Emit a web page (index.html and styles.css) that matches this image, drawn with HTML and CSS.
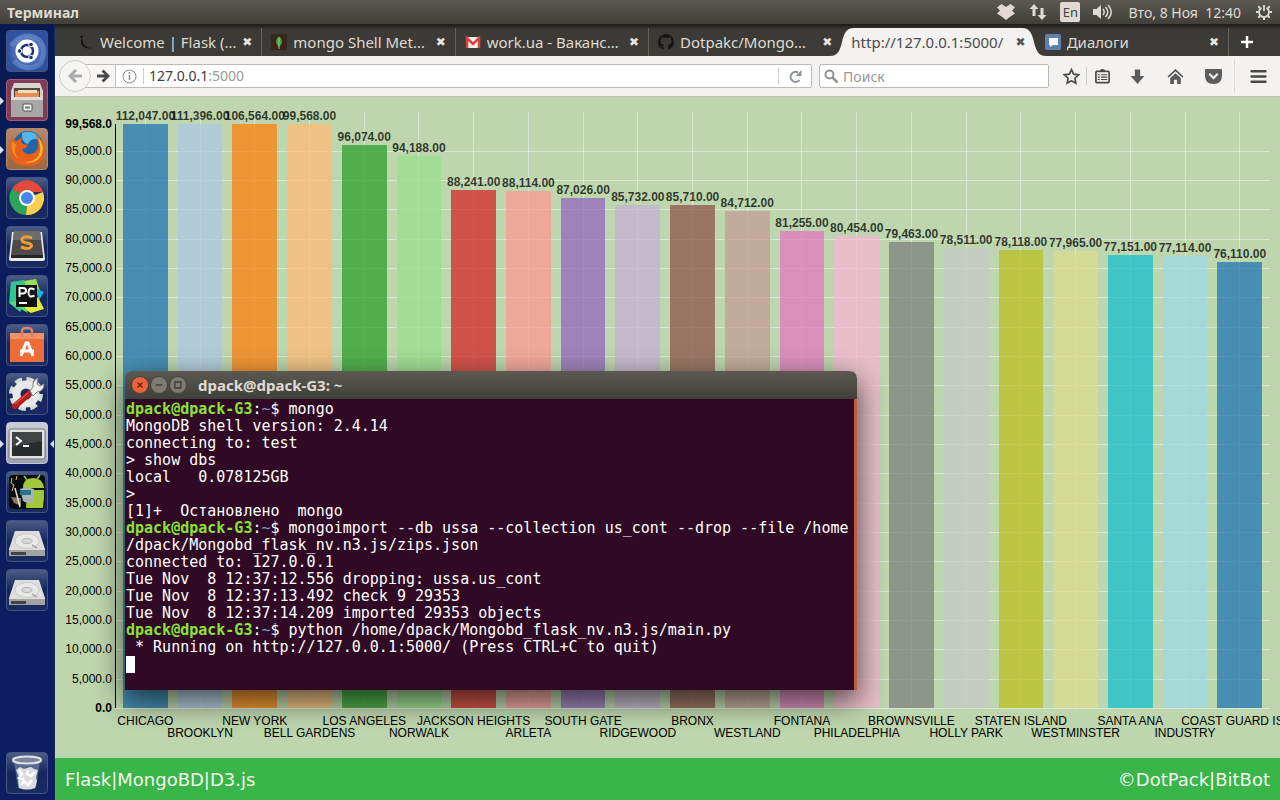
FILE: index.html
```html
<!DOCTYPE html>
<html lang="ru">
<head>
<meta charset="utf-8">
<meta name="viewport" content="width=device-width, initial-scale=1">
<title>Терминал</title>
<link rel="stylesheet" href="styles.css">
</head>
<body>
<header class="panel">
  <h1 class="panel-title">Терминал</h1>
  <div class="indicators">
    <svg class="ind" width="20" height="18" viewBox="0 0 20 18" fill="#dfdbd2"><path d="M5.500 1L10 4l4.500-3L19 4.500 16 7.500l3 3-4.500 3L10 17l-4.500-3.500-4.500-3 3-3-3-3z"/></svg>
    <svg class="ind" width="18" height="16" viewBox="0 0 18 16" fill="#dfdbd2"><path d="M5 0L.5 5h3v7h3V5h3zM13 16l4.500-5h-3V4h-3v7h-3z"/></svg>
    <span class="layout">En</span>
    <svg class="ind" width="20" height="16" viewBox="0 0 20 16"><path fill="#dfdbd2" d="M0 5h3.500L8 1v14l-4.500-4H0z"/><path d="M10 5q2.500 3 0 6M12.500 3q4.500 5 0 10M15 1q6.500 7 0 14" fill="none" stroke="#dfdbd2" stroke-width="1.500"/></svg>
    <time class="clock">Вто, 8 Ноя&nbsp; 12:40</time>
    <svg class="ind" width="16" height="16" viewBox="0 0 16 16" fill="none" stroke="#dfdbd2"><path stroke-width="1.800" d="M5.500 3.800a5 5 0 1 0 5 0M8 1v6"/><path stroke-width="2" d="M2.300 2.300l1.700 1.700M13.700 2.300L12 4M0 8h2.500M13.500 8H16M2.300 13.700L4 12M13.700 13.700L12 12M8 13.500V16"/></svg>
  </div>
</header>

<div class="desktop">
  <nav class="launcher" aria-label="Launcher">
    <button class="tile tile-dash" aria-label="Ubuntu"><svg viewBox="0 0 42 42"><path d="M5 16Q18 0 33 10Q42 20 34 34Q20 43 8 31" fill="none" stroke="#8fb0ea" stroke-width="5" opacity=".35"/><circle cx="21" cy="21" r="11.500" fill="#fff"/><circle cx="21" cy="21" r="6" fill="none" stroke="#1d3577" stroke-width="2.500"/><g fill="#1d3577" stroke="#fff"><circle cx="13.500" cy="21" r="2.300"/><circle cx="25" cy="14.500" r="2.300"/><circle cx="25" cy="27.500" r="2.300"/></g></svg></button>
    <button class="tile tile-files running" aria-label="Files"><svg viewBox="0 0 42 42"><path d="M8 4h26l3 8v25q0 1-1 1H6q-1 0-1-1V12z" fill="#d6d4d0"/><path d="M8 9h26v9H8z" fill="#4f4842"/><path d="M9 12h24v6H9z" fill="#e88e55"/><path d="M12 11h19v3H12z" fill="#f3ddbd"/><path d="M5 18h32v19q0 1-1 1H6q-1 0-1-1z" fill="#a8a7a5"/><path d="M5 18h32v3H5z" fill="#deddda"/><rect x="17" y="25" width="9" height="7" rx="1" fill="#eee" stroke="#555"/><path d="M19 27.500h5v2h-5z" fill="#777"/></svg></button>
    <button class="tile tile-firefox running" aria-label="Firefox"><svg viewBox="0 0 42 42"><circle cx="22" cy="18" r="15" fill="#2165a7"/><path d="M16 5q12-4 18 6-10-1-12 5-7-2-6-11z" fill="#55b7e7"/><path d="M5 9q3 4 6 4 2-3 6-3-4 4 0 6l5 1q-2 4-6 4 2 6 8 5 7-1 8-7 1-7-3-12 12 7 9 20-3 11-17 11Q5 37 4 23q0-8 1-14z" fill="#e8601c"/><path d="M32 9q8 10 3 19-6 9-17 6 18 0 16-17z" fill="#f9ba2b"/><path d="M6 13q-2 12 6 18-5-8-2-14z" fill="#f58b24"/></svg></button>
    <button class="tile" aria-label="Chrome"><svg viewBox="0 0 42 42"><path d="M21 21L6 12a17 17 0 0 1 31 3H21z" fill="#e24a3b"/><path d="M21 21L37 15a17 17 0 0 1-17 23z" fill="#fbd04c"/><path d="M21 21l-1 17A17 17 0 0 1 6 12z" fill="#2da45a"/><circle cx="21" cy="21" r="8" fill="#fff"/><circle cx="21" cy="21" r="6" fill="#4687ed"/></svg></button>
    <button class="tile" aria-label="Sublime Text"><svg viewBox="0 0 42 42"><path d="M6 6h30l3 27q0 2-2 2H5q-2 0-2-2z" fill="#e9e9e9"/><path d="M8 5h26l3 24H5z" fill="#4b4b4b"/><path d="M8 5h26l1 9H7z" fill="#6d6d6d"/><path d="M5 29h32v3H5z" fill="#252525"/><path d="M26 12q-8-3-10 1-1 3 5 4t4 4q-2 3-10 0" fill="none" stroke="#f39a36" stroke-width="3"/></svg></button>
    <button class="tile" aria-label="PyCharm"><svg viewBox="0 0 42 42"><path d="M5 7l13-2 7 12-11 20-11-9z" fill="#2bc891"/><path d="M18 6l12-2 4 12-8 8z" fill="#9adf4c"/><path d="M29 13l9 4-5 8z" fill="#18b2dd"/><path d="M13 31l19-9 6 12-13 4z" fill="#dfea3b"/><path d="M4 28l10-4 8 14z" fill="#62da68"/><path d="M10 10h21v22H10z" fill="#111"/><path d="M13.500 22v-9h3.500q3 0 3 2.700T17 18.500h-3M28.500 14.500q-6-3-6 3t6 3" fill="none" stroke="#fff" stroke-width="2"/><path d="M13 28h8" stroke="#fff" stroke-width="2"/></svg></button>
    <button class="tile" aria-label="Software"><svg viewBox="0 0 42 42"><path d="M4 9h34v29H4z" fill="#ed6d38"/><path d="M4 9h34v6H4z" fill="#f59066"/><path d="M16 13V7q0-3 5-3t5 3v6" fill="none" stroke="#d9806a" stroke-width="2.500"/><path d="M15 32l5-13h2l5 13M14 27h14" fill="none" stroke="#fff" stroke-width="3"/></svg></button>
    <button class="tile" aria-label="Settings"><svg viewBox="0 0 42 42"><circle cx="20" cy="21" r="14.500" fill="none" stroke="#d9dadb" stroke-width="5" stroke-dasharray="7 4.400"/><circle cx="20" cy="21" r="9.500" fill="none" stroke="#e8e8e8" stroke-width="8"/><path d="M9 33L24 20" stroke="#b51d1d" stroke-width="6" stroke-linecap="round"/><path d="M9 31L22 20" stroke="#e34b42" stroke-width="1.500"/><path d="M24 18l3-4q-1-6 5-9l-1 6 3 2 4-2q0 7-7 8l-4 4z" fill="#f0f0f0" stroke="#888"/></svg></button>
    <button class="tile tile-active running focused" aria-label="Terminal"><svg viewBox="0 0 42 42"><rect x="3" y="7" width="36" height="30" rx="2" fill="#e0e0df" stroke="#777"/><path d="M6 10h30v24H6z" fill="#292b2d"/><path d="M6 10h30v9L6 25z" fill="#414345"/><path d="M10 15l5 4-5 4M17 24h6" fill="none" stroke="#fff" stroke-width="2"/></svg></button>
    <button class="tile" aria-label="Android"><svg viewBox="0 0 42 42"><rect x="3" y="4" width="36" height="34" rx="4" fill="#080b0e"/><path d="M17 17q0-10 10-10 10 0 11 10zM21 19h17v8l-1 10H20z" fill="#a0c93a"/><path d="M21 9l-3-4M31 8l3-4" stroke="#a0c93a" stroke-width="1.500"/><path d="M14 18q7-3 14 0v12q-5 4-11 0z" fill="#a8b4b4"/><path d="M14 19h11v5H14z" fill="#28718d"/><path d="M5 26l10 1v8l-7-3z" fill="#8a7766"/><path d="M9 17l5 19" stroke="#ddd" stroke-width="1.500"/><path d="M6 7l-1 5 3 2-2 6M11 5l-1 4" fill="none" stroke="#dbcc34"/></svg></button>
    <button class="tile" aria-label="Disk"><svg viewBox="0 0 42 42"><use href="#disk"/></svg></button>
    <button class="tile" aria-label="Disk 2"><svg viewBox="0 0 42 42"><g id="disk"><path d="M9 11h24l6 18v6q0 1-1 1H4q-1 0-1-1v-6z" fill="#dddddc"/><path d="M3 30h36v5q0 1-1 1H4q-1 0-1-1z" fill="#a3a3a1"/><path d="M5 32h15v3H5z" fill="#444"/><ellipse cx="21" cy="21" rx="12" ry="7.500" fill="#e8e8e6" stroke="#c8c8c8"/><ellipse cx="21" cy="21" rx="5" ry="2.500" fill="#d8d8d7" stroke="#b5b5b5"/><path d="M31 28l-5-3" stroke="#aaa" stroke-width="1.500"/></g></svg></button>
    <button class="tile tile-trash" aria-label="Trash"><svg viewBox="0 0 42 42"><path d="M8 9h26l-4 27q-9 3-18 0z" fill="#8e9cb4" opacity=".5"/><path d="M10 18l4-3 4 2 3-1 4-1 3 2 4 1-2 7 1 4-2 7q-8 3-16 0l-1-7 1-4z" fill="#d9dbdd"/><path d="M13 18l3 4-3 4 5 1M22 18l-1 4 4 2 4-4M15 33l3-4 4 4 4-5" fill="none" stroke="#fff" stroke-width="2.500"/><ellipse cx="21" cy="8" rx="14" ry="3.500" fill="#77849a" stroke="#dfe4e7" stroke-width="2"/></svg></button>
  </nav>

  <main class="browser">
    <div class="tabs">
      <div class="tab"><svg class="fav" viewBox="0 0 16 16"><path d="M1 3l5-2-2 3 1 5q3 5 9 5-9 2-11-5L3 4z" fill="#171716"/></svg><a href="#flask">Welcome | Flask (…</a><button class="close" aria-label="Close"></button></div>
      <div class="tab split"><svg class="fav" viewBox="0 0 16 16"><path d="M0 0h16v16H0z" fill="#3b2418"/><path d="M8 2q-6 6 0 11 6-5 0-11z" fill="#3fa34b"/><path d="M8 4v11" stroke="#a8c17c"/></svg><a href="#mongo">mongo Shell Met…</a><button class="close" aria-label="Close"></button></div>
      <div class="tab split"><svg class="fav" viewBox="0 0 16 16"><path d="M1 3h14v11H1z" fill="#f0eeee"/><path d="M2 14V4l6 6 6-6v10" fill="none" stroke="#d7433a" stroke-width="2.500"/></svg><a href="#work">work.ua - Ваканс…</a><button class="close" aria-label="Close"></button></div>
      <div class="tab split"><svg class="fav" viewBox="0 0 16 16"><path d="M8 0a8 8 0 0 0-2.500 15.600V13Q3 13.500 2.500 11.500q2.500 2 3.500-.5-3.500-.5-3.500-4 0-1 .8-2-.3-1 .1-2 1 0 2.100.9 2.500-.6 5 0 1.100-.9 2.100-.9.4 1 .1 2 .8 1 .8 2 0 3.500-3.500 4 .5.500.5 1.500v3.100A8 8 0 0 0 8 0z" fill="#151513"/></svg><a href="#github">Dotpakc/Mongo…</a><button class="close" aria-label="Close"></button></div>
      <div class="tab tab-current"><svg class="curve curve-left" viewBox="0 0 24 28"><path d="M0 28C8 28 10 22 12 14S16 0 24 0V28z" fill="#f3f2f1"/></svg><svg class="curve curve-right" viewBox="0 0 24 28"><path d="M24 28C16 28 14 22 12 14S8 0 0 0V28z" fill="#f3f2f1"/></svg><a href="#local">http://127.0.0.1:5000/</a><button class="close" aria-label="Close"></button></div>
      <div class="tab"><svg class="fav" viewBox="0 0 16 16"><rect width="16" height="16" rx="2" fill="#5c82ad"/><path d="M4 4h9v7H8l-3 2v-2H4z" fill="#fff"/></svg><a href="#dialogs">Диалоги</a><button class="close" aria-label="Close"></button></div>
      <button class="newtab" aria-label="New tab"><svg width="14" height="14" viewBox="0 0 14 14"><path d="M7 1v12M1 7h12" stroke="#fff" stroke-width="2.500"/></svg></button>
    </div>

    <div class="toolbar">
      <div class="location">
        <button class="back" aria-label="Back"><svg width="14" height="14" viewBox="0 0 14 14"><path d="M14 7H3M8 1L2 7l6 6" fill="none" stroke="#aaa" stroke-width="3"/></svg></button>
        <button class="forward" aria-label="Forward"><svg width="13" height="14" viewBox="0 0 14 14"><path d="M0 7h11M6 1l6 6-6 6" fill="none" stroke="#484848" stroke-width="3"/></svg></button>
        <svg class="info" width="15" height="15" viewBox="0 0 15 15"><circle cx="7.500" cy="7.500" r="6.500" fill="none" stroke="#8b8b8b"/><path d="M7.500 3v2M7.500 6v5" stroke="#8b8b8b" stroke-width="1.500"/></svg>
        <span class="url">127.0.0.1<span class="port">:5000</span></span>
        <button class="reload" aria-label="Reload"><svg width="13" height="13" viewBox="0 0 13 13"><path d="M9 2.500A5 5 0 1 0 10.500 10" fill="none" stroke="#8b9196" stroke-width="2"/><path d="M12.500 0v6H6.500z" fill="#8b9196"/></svg></button>
      </div>
      <label class="search"><svg width="15" height="15" viewBox="0 0 15 15"><circle cx="5.500" cy="5.500" r="4" fill="none" stroke="#919191" stroke-width="2"/><path d="M8.500 8.500l5 5" stroke="#919191" stroke-width="2.500"/></svg><input type="search" placeholder="Поиск" aria-label="Поиск"></label>
      <div class="tools">
        <button aria-label="Bookmark"><svg viewBox="0 0 16 16"><path d="M8 1.500l2 4.300 4.700.6-3.500 3.200.9 4.700L8 12l-4.100 2.300.9-4.700L1.300 6.400 6 5.800z" fill="none" stroke="#4b4b4b" stroke-width="1.600"/></svg></button>
        <button class="ruled" aria-label="List"><svg viewBox="0 0 16 16"><rect x="1.800" y="3.200" width="12.400" height="10.600" rx="1" fill="none" stroke="#4b4b4b" stroke-width="1.600"/><path d="M5.500 3q0-2 2.500-2t2.500 2z" fill="#4b4b4b"/><path d="M3.500 6.300h2m1 0h6M3.500 8.600h2m1 0h6M3.500 10.900h2m1 0h6" stroke="#4b4b4b"/></svg></button>
        <button aria-label="Downloads"><svg viewBox="0 0 16 16"><path d="M5.500 1.500h5v6h4L8 15 1.500 7.500h4z" fill="#5c5c5c"/></svg></button>
        <button aria-label="Home"><svg viewBox="0 0 16 16"><path d="M8 5l5 4.500V15H9.500v-4h-3v4H3V9.500z" fill="#5c5c5c"/><path d="M1 8.500l7-6.500 7 6.500" fill="none" stroke="#4b4b4b" stroke-width="1.400"/></svg></button>
        <button aria-label="Pocket"><svg viewBox="0 0 16 16"><path d="M1 1h14q1 0 1 1v5q0 8-8 8T0 7V2q0-1 1-1z" fill="#5c5c5c"/><path d="M4 5.500l4 4 4-4" fill="none" stroke="#f3f2f1" stroke-width="2"/></svg></button>
        <button class="menu" aria-label="Menu"><svg viewBox="0 0 16 16"><path d="M1.500 3h13M1.500 8h13M1.500 13h13" stroke="#484848" stroke-width="2.400" stroke-linecap="round"/></svg></button>
      </div>
    </div>

    <section class="page">
      <div class="chart">
        <ul class="y-axis">
          <li class="bound">0.0</li><li>5,000.0</li><li>10,000.0</li><li>15,000.0</li><li>20,000.0</li><li>25,000.0</li><li>30,000.0</li><li>35,000.0</li><li>40,000.0</li><li>45,000.0</li><li>50,000.0</li><li>55,000.0</li><li>60,000.0</li><li>65,000.0</li><li>70,000.0</li><li>75,000.0</li><li>80,000.0</li><li>85,000.0</li><li>90,000.0</li><li class="last">95,000.0</li><li class="max bound">99,568.0</li>
        </ul>
        <div class="plot">
          <div class="rules"><i></i><i></i><i></i><i></i><i></i><i></i><i></i><i></i><i></i><i></i><i></i><i></i><i></i><i></i><i></i><i></i><i></i><i></i><i></i><i class="last"></i></div>
          <ol class="bars">
            <li style="--v:112047"><span>112,047.00</span><b></b></li>
            <li style="--v:111396"><span>111,396.00</span><b></b></li>
            <li style="--v:106564"><span>106,564.00</span><b></b></li>
            <li style="--v:99568"><span>99,568.00</span><b></b></li>
            <li style="--v:96074"><span>96,074.00</span><b></b></li>
            <li style="--v:94188"><span>94,188.00</span><b></b></li>
            <li style="--v:88241"><span>88,241.00</span><b></b></li>
            <li style="--v:88114"><span>88,114.00</span><b></b></li>
            <li style="--v:87026"><span>87,026.00</span><b></b></li>
            <li style="--v:85732"><span>85,732.00</span><b></b></li>
            <li style="--v:85710"><span>85,710.00</span><b></b></li>
            <li style="--v:84712"><span>84,712.00</span><b></b></li>
            <li style="--v:81255"><span>81,255.00</span><b></b></li>
            <li style="--v:80454"><span>80,454.00</span><b></b></li>
            <li style="--v:79463"><span>79,463.00</span><b></b></li>
            <li style="--v:78511"><span>78,511.00</span><b></b></li>
            <li style="--v:78118"><span>78,118.00</span><b></b></li>
            <li style="--v:77965"><span>77,965.00</span><b></b></li>
            <li style="--v:77151"><span>77,151.00</span><b></b></li>
            <li style="--v:77114"><span>77,114.00</span><b></b></li>
            <li style="--v:76110"><span>76,110.00</span><b></b></li>
          </ol>
        </div>
        <ol class="x-axis">
          <li>CHICAGO</li><li>BROOKLYN</li><li>NEW YORK</li><li>BELL GARDENS</li><li>LOS ANGELES</li><li>NORWALK</li><li>JACKSON HEIGHTS</li><li>ARLETA</li><li>SOUTH GATE</li><li>RIDGEWOOD</li><li>BRONX</li><li>WESTLAND</li><li>FONTANA</li><li>PHILADELPHIA</li><li>BROWNSVILLE</li><li>HOLLY PARK</li><li>STATEN ISLAND</li><li>WESTMINSTER</li><li>SANTA ANA</li><li>INDUSTRY</li><li>COAST GUARD ISLA</li>
        </ol>
      </div>
      <footer class="footer"><span>Flask|MongoBD|D3.js</span><span>©DotPack|BitBot</span></footer>
    </section>
  </main>
</div>

<section class="terminal" aria-label="dpack@dpack-G3: ~">
  <div class="titlebar">
    <button class="win win-close" aria-label="Close window"><svg viewBox="0 0 16 16"><path d="M5.500 5.500l5 5M10.500 5.500l-5 5" stroke="#5c2412" stroke-width="1.300"/></svg></button>
    <button class="win" aria-label="Minimize"><svg viewBox="0 0 16 16"><path d="M4.500 8h7" stroke="#3c3b37" stroke-width="1.300"/></svg></button>
    <button class="win" aria-label="Maximize"><svg viewBox="0 0 16 16"><path d="M5 5h6v6H5z" fill="none" stroke="#3c3b37" stroke-width="1.300"/></svg></button>
    <h2>dpack@dpack-G3: ~</h2>
  </div>
  <pre class="screen"><b>dpack@dpack-G3</b>:<i>~</i>$ mongo
MongoDB shell version: 2.4.14
connecting to: test
&gt; show dbs
local   0.078125GB
&gt; 
[1]+  Остановлено  mongo
<b>dpack@dpack-G3</b>:<i>~</i>$ mongoimport --db ussa --collection us_cont --drop --file /home
/dpack/Mongobd_flask_nv.n3.js/zips.json
connected to: 127.0.0.1
Tue Nov  8 12:37:12.556 dropping: ussa.us_cont
Tue Nov  8 12:37:13.492 check 9 29353
Tue Nov  8 12:37:14.209 imported 29353 objects
<b>dpack@dpack-G3</b>:<i>~</i>$ python /home/dpack/Mongobd_flask_nv.n3.js/main.py
 * Running on http://127.0.0.1:5000/ (Press CTRL+C to quit)
<span class="cursor"></span></pre>
</section>
</body>
</html>
```
FILE: styles.css
```css
* { box-sizing: border-box; }
body {
  margin: 0;
  height: 100vh;
  display: flex;
  flex-direction: column;
  overflow: hidden;
  font-family: "Noto Sans", "Open Sans", sans-serif;
  font-size: 14px;
}
button {
  padding: 0;
  border: 0;
  background: none;
  display: flex;
  align-items: center;
  justify-content: center;
}
svg { display: block; flex: none; }
ul, ol { margin: 0; padding: 0; list-style: none; }

/* Top panel */
.panel {
  flex: none;
  height: 24px;
  padding: 0 8px 0 7px;
  display: flex;
  align-items: center;
  justify-content: space-between;
  background: linear-gradient(#5b5951, #403f3a);
  color: #dfdbd2;
}
.panel-title { margin: 0; font-size: 14px; }
.indicators { display: flex; align-items: center; gap: 13px; }
.layout {
  width: 20px;
  height: 20px;
  border-radius: 2px;
  background: #dfdbd2;
  color: #45443f;
  font-size: 13px;
  line-height: 20px;
  text-align: center;
}
.clock { margin: 0 2px; white-space: nowrap; }

.desktop { flex: 1; min-height: 0; display: flex; }

/* Launcher */
.launcher {
  flex: none;
  width: 55px;
  padding: 6px;
  display: flex;
  flex-direction: column;
  gap: 7px;
  background: linear-gradient(#071a50, #0a1c5b 20%, #0c1d62);
  border-right: 1px solid #17275c;
}
.tile {
  flex: none;
  position: relative;
  width: 42px;
  height: 42px;
  border: 1px solid #43547d;
  border-radius: 4px;
  background: linear-gradient(#4b5c86, #13265e 50%, #1a2c62);
}
.tile svg { width: 42px; height: 42px; }
.tile-dash { background: radial-gradient(#86a4e0, #2e529f 70%); }
.tile-files { background: #803b55; border-color: #9a6076; }
.tile-firefox { background: linear-gradient(#b58868, #9c673f); border-color: #b08a70; }
.tile-active { background: linear-gradient(#c8ccd4, #9da3b3); border-color: #c3c8d2; }
.tile-trash { margin-top: auto; }
.running::before, .focused::after {
  content: "";
  position: absolute;
  top: 17px;
  left: -7px;
  border: 4px solid transparent;
  border-left-color: #d9e0f2;
  border-right-width: 0;
}
.focused::after {
  left: auto;
  right: -7px;
  border-width: 4px 4px 4px 0;
  border-right-color: #d9e0f2;
}

/* Browser */
.browser { flex: 1; min-width: 0; display: flex; flex-direction: column; }
.tabs {
  flex: none;
  height: 32px;
  padding: 4px 0 0 13px;
  display: flex;
  background: linear-gradient(#1d1c1a, #3b3a36 6px, #3c3b37);
}
.tab {
  flex: 1 1 0;
  min-width: 0;
  position: relative;
  padding: 0 8px 0 10px;
  display: flex;
  align-items: center;
  font-size: 15px;
}
.split { box-shadow: inset 1px 0 #66645e; }
.fav { width: 16px; height: 16px; margin-right: 6px; }
.tab a {
  flex: 1;
  overflow: hidden;
  white-space: nowrap;
  line-height: 20px;
  color: #dfdbd2;
  text-decoration: none;
}
.close { flex: none; width: 12px; height: 12px; color: #e8e5df; position: relative; }
.close::before { content: "✖"; font: 12px/12px "DejaVu Sans", sans-serif; }
.tab-current { background: linear-gradient(90deg, transparent 12px, #f3f2f1 12px, #f3f2f1 calc(100% - 12px), transparent calc(100% - 12px)); z-index: 1; }
.tab-current a { color: #4c4c4c; position: relative; }
.tab-current .close { color: #555; }
.curve { position: absolute; top: 0; width: 24px; height: 28px; }
.curve-left { left: -11px; }
.curve-right { right: -11px; }
.newtab { flex: none; width: 52px; padding-right: 14px; box-shadow: inset 1px 0 #66645e; }

.toolbar {
  flex: none;
  height: 40px;
  padding: 0 11px 0 4px;
  display: flex;
  align-items: center;
  background: #f3f2f1;
  color: #3c3c3c;
}
.location {
  flex: 1;
  height: 24px;
  margin: 0 7px 0 14px;
  display: flex;
  align-items: center;
  border: 1px solid #bdbbb8;
  border-radius: 2px;
  background: #fff;
}
.back {
  flex: none;
  width: 32px;
  height: 32px;
  margin-left: -15px;
  border: 1px solid #cfcdca;
  border-radius: 50%;
  background: #f6f5f4;
}
.forward { flex: none; width: 25px; height: 22px; border-right: 1px solid #c6c4c1; background: #f6f5f4; }
.info { margin: 0 6px; }
.url { flex: 1; padding-left: 5px; border-left: 1px solid #ccc; line-height: 16px; }
.port { color: #999; }
.reload { width: 33px; height: 16px; border-left: 1px solid #ccc; }
.search {
  flex: none;
  width: 19%;
  height: 24px;
  padding: 0 4px;
  display: flex;
  align-items: center;
  gap: 4px;
  border: 1px solid #bdbbb8;
  border-radius: 2px;
  background: #fff;
}
.search input { flex: 1; min-width: 0; border: 0; padding: 0; background: none; font: inherit; }
.search input::placeholder { color: #999; opacity: 1; }
.tools { flex: none; display: flex; align-items: center; padding-left: 7px; }
.tools button { width: 38px; height: 18px; }
.tools button:first-child { width: 30px; }
.tools svg { width: 17px; height: 17px; }
.tools .ruled { width: 32px; border-left: 1px solid #ccc; }
.tools .menu { height: 34px; width: 35px; padding-left: 12px; margin-left: 2px; border-left: 1px solid #ddd; }

/* Page */
.page {
  flex: 1;
  min-height: 0;
  display: flex;
  flex-direction: column;
  background: #bdd6ad;
  border-top: 1px solid #bfc4b4;
  font-family: "Liberation Sans", Arial, sans-serif;
}
.chart {
  flex: 1;
  min-height: 0;
  padding: 27px 10px 0 0;
  display: grid;
  grid-template: minmax(0, 1fr) 50px / 60px minmax(0, 1fr);
  font-size: 12px;
}
.y-axis, .rules { display: flex; flex-direction: column-reverse; }
.y-axis li, .rules i { flex: 5000 1 0; min-height: 0; display: flex; align-items: flex-end; }
.y-axis li { justify-content: flex-end; padding-right: 3px; line-height: 0; }
.y-axis .last, .rules .last { flex-grow: 4568; }
.y-axis .max { flex: none; }
.y-axis .bound { font-weight: bold; }
.plot { display: grid; border-left: 1px solid #000; }
.rules, .bars { grid-area: 1 / 1; min-height: 0; min-width: 0; }
.rules i { box-shadow: 0 1px rgba(255, 255, 255, .45); }
.bars, .x-axis { display: flex; gap: 10px; padding: 0 8px 0 7px; }
.bars li {
  flex: 1 1 0;
  min-width: 0;
  margin-top: -12px;
  padding-top: 12px;
  display: flex;
  flex-direction: column;
  justify-content: flex-end;
  align-items: center;
  background: linear-gradient(rgba(255, 255, 255, .4), rgba(255, 255, 255, .4)) center / 1px 100% no-repeat;
}
.bars span {
  flex: none;
  margin-top: -15px;
  line-height: 15px;
  font-weight: bold;
  color: rgba(0, 0, 0, .75);
  white-space: nowrap;
}
.bars b {
  flex: none;
  width: 100%;
  height: min(100%, calc(var(--v) / 99568 * 100%));
  opacity: .75;
  background: #1f77b4;
}
.bars li:nth-child(2) b { background: #aec7e8; }
.bars li:nth-child(3) b { background: #ff7f0e; }
.bars li:nth-child(4) b { background: #ffbb78; }
.bars li:nth-child(5) b { background: #2ca02c; }
.bars li:nth-child(6) b { background: #98df8a; }
.bars li:nth-child(7) b { background: #d62728; }
.bars li:nth-child(8) b { background: #ff9896; }
.bars li:nth-child(9) b { background: #9467bd; }
.bars li:nth-child(10) b { background: #c5b0d5; }
.bars li:nth-child(11) b { background: #8c564b; }
.bars li:nth-child(12) b { background: #c49c94; }
.bars li:nth-child(13) b { background: #e377c2; }
.bars li:nth-child(14) b { background: #f7b6d2; }
.bars li:nth-child(15) b { background: #7f7f7f; }
.bars li:nth-child(16) b { background: #c7c7c7; }
.bars li:nth-child(17) b { background: #bcbd22; }
.bars li:nth-child(18) b { background: #dbdb8d; }
.bars li:nth-child(19) b { background: #17becf; }
.bars li:nth-child(20) b { background: #9edae5; }
.x-axis { grid-column: 2; padding: 7px 8px 0; line-height: 12px; }
.x-axis li { flex: 1 1 0; min-width: 0; display: flex; justify-content: center; white-space: nowrap; }
.x-axis li:nth-child(even) { padding-top: 12px; }
.footer {
  flex: none;
  height: 42px;
  padding: 0 10px;
  display: flex;
  align-items: center;
  justify-content: space-between;
  background: #3ab549;
  color: #f2f8ee;
  font: 18px "DejaVu Sans", sans-serif;
}

/* Terminal window floating over the desktop */
.terminal {
  position: absolute;
  z-index: 2;
  left: 125px;
  top: 371px;
  width: 732px;
  border-radius: 7px 7px 0 0;
  box-shadow: 0 10px 28px 2px rgba(0, 0, 0, .6);
}
.titlebar {
  height: 28px;
  padding: 0 7px;
  display: flex;
  align-items: center;
  gap: 3px;
  border-radius: 7px 7px 0 0;
  background: linear-gradient(#5b5951, #403f3a);
  color: #dfdbd2;
}
.titlebar h2 { margin: 0 0 0 9px; font-size: 15px; line-height: 20px; }
.win { width: 16px; height: 16px; border-radius: 50%; background: #7d7b74; box-shadow: 0 0 0 1px #44433d; }
.win-close { background: #ee6238; }
.win svg { width: 16px; height: 16px; }
.screen {
  margin: 0;
  padding: 2px 0 17px 1px;
  border-right: 3px solid #bb5f41;
  background: #300a24;
  color: #fff;
  font: 15px/17px "DejaVu Sans Mono", monospace;
}
.screen b { color: #8ae234; }
.screen i { color: #729fcf; font-style: normal; }
.cursor { display: inline-block; width: 9px; height: 17px; background: #fff; vertical-align: top; }
```
